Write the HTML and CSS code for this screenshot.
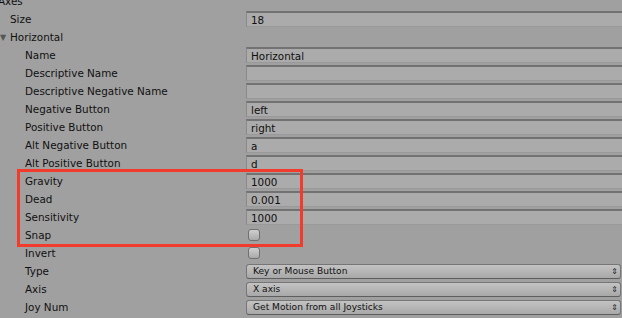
FILE: index.html
```html
<!DOCTYPE html>
<html lang="en">
<head>
    <meta charset="UTF-8">
    <title>Input Manager - Axes</title>
    <link rel="stylesheet" href="styles.css">
</head>
<body>
    <div class="inspector">
        <div class="row"><span class="label level-0">Axes</span></div>
        <div class="row">
            <span class="label level-1">Size</span>
            <span class="field">18</span>
        </div>
        <div class="row">
            <span class="label level-fold"><span class="fold">&#9660;</span>Horizontal</span>
        </div>
        <div class="row">
            <span class="label level-2">Name</span>
            <span class="field">Horizontal</span>
        </div>
        <div class="row">
            <span class="label level-2">Descriptive Name</span>
            <span class="field"></span>
        </div>
        <div class="row">
            <span class="label level-2">Descriptive Negative Name</span>
            <span class="field"></span>
        </div>
        <div class="row">
            <span class="label level-2">Negative Button</span>
            <span class="field">left</span>
        </div>
        <div class="row">
            <span class="label level-2">Positive Button</span>
            <span class="field">right</span>
        </div>
        <div class="row">
            <span class="label level-2">Alt Negative Button</span>
            <span class="field">a</span>
        </div>
        <div class="row">
            <span class="label level-2">Alt Positive Button</span>
            <span class="field">d</span>
        </div>
        <div class="row">
            <span class="label level-2">Gravity</span>
            <span class="field">1000</span>
        </div>
        <div class="row">
            <span class="label level-2">Dead</span>
            <span class="field">0.001</span>
        </div>
        <div class="row">
            <span class="label level-2">Sensitivity</span>
            <span class="field">1000</span>
        </div>
        <div class="row">
            <span class="label level-2">Snap</span>
            <span class="check"></span>
        </div>
        <div class="row">
            <span class="label level-2">Invert</span>
            <span class="check"></span>
        </div>
        <div class="row">
            <span class="label level-2">Type</span>
            <span class="popup">Key or Mouse Button<span class="arrows">&#8661;</span></span>
        </div>
        <div class="row">
            <span class="label level-2">Axis</span>
            <span class="popup">X axis<span class="arrows">&#8661;</span></span>
        </div>
        <div class="row">
            <span class="label level-2">Joy Num</span>
            <span class="popup">Get Motion from all Joysticks<span class="arrows">&#8661;</span></span>
        </div>

        <!-- highlight annotation -->
        <div class="highlight"></div>
    </div>
</body>
</html>
```

FILE: styles.css
```css
html, body {
    margin: 0;
    padding: 0;
    background: #a0a0a0;
    overflow: hidden;
}
.inspector {
    position: relative;
    margin-top: -8px;
    font-family: "DejaVu Sans", sans-serif;
    font-size: 10.4px;
    color: #101010;
}
.row {
    display: flex;
    align-items: center;
    height: 18px;
}
.label {
    flex: 0 0 auto;
    box-sizing: border-box;
    width: 246px;
    white-space: nowrap;
}
.level-0 {
    margin-left: -2px;
    width: 248px;
}
.level-1 {
    padding-left: 10px;
}
.level-fold {
    padding-left: 0;
}
.fold {
    display: inline-block;
    width: 10px;
    font-size: 8px;
    color: #555;
    vertical-align: 1px;
}
.level-2 {
    padding-left: 25px;
}
.field {
    flex: 1;
    box-sizing: border-box;
    height: 16px;
    line-height: 14px;
    padding-left: 4px;
    margin-right: -4px;
    background: #ababab;
    border-top: 2px solid #727272;
    border-left: 1px solid #8a8a8a;
    border-bottom: 1px solid #999;
    white-space: nowrap;
}
.check {
    box-sizing: border-box;
    width: 12px;
    height: 12px;
    margin-left: 2px;
    border: 1px solid #707070;
    border-radius: 3px;
    background: linear-gradient(#cfcfcf, #a9a9a9);
}
.popup {
    flex: 1;
    position: relative;
    box-sizing: border-box;
    height: 15px;
    line-height: 13px;
    padding-left: 6px;
    margin-right: 1px;
    border: 1px solid #767676;
    border-bottom-color: #5e5e5e;
    border-radius: 3px;
    background: linear-gradient(#c3c3c3, #a8a8a8);
    font-size: 9.1px;
    white-space: nowrap;
}
.arrows {
    position: absolute;
    right: 2px;
    top: 0;
    font-size: 8px;
    color: #222;
}
.highlight {
    position: absolute;
    left: 17px;
    top: 177px;
    width: 286px;
    height: 78px;
    box-sizing: border-box;
    border: 3px solid #f23b2b;
}
```
